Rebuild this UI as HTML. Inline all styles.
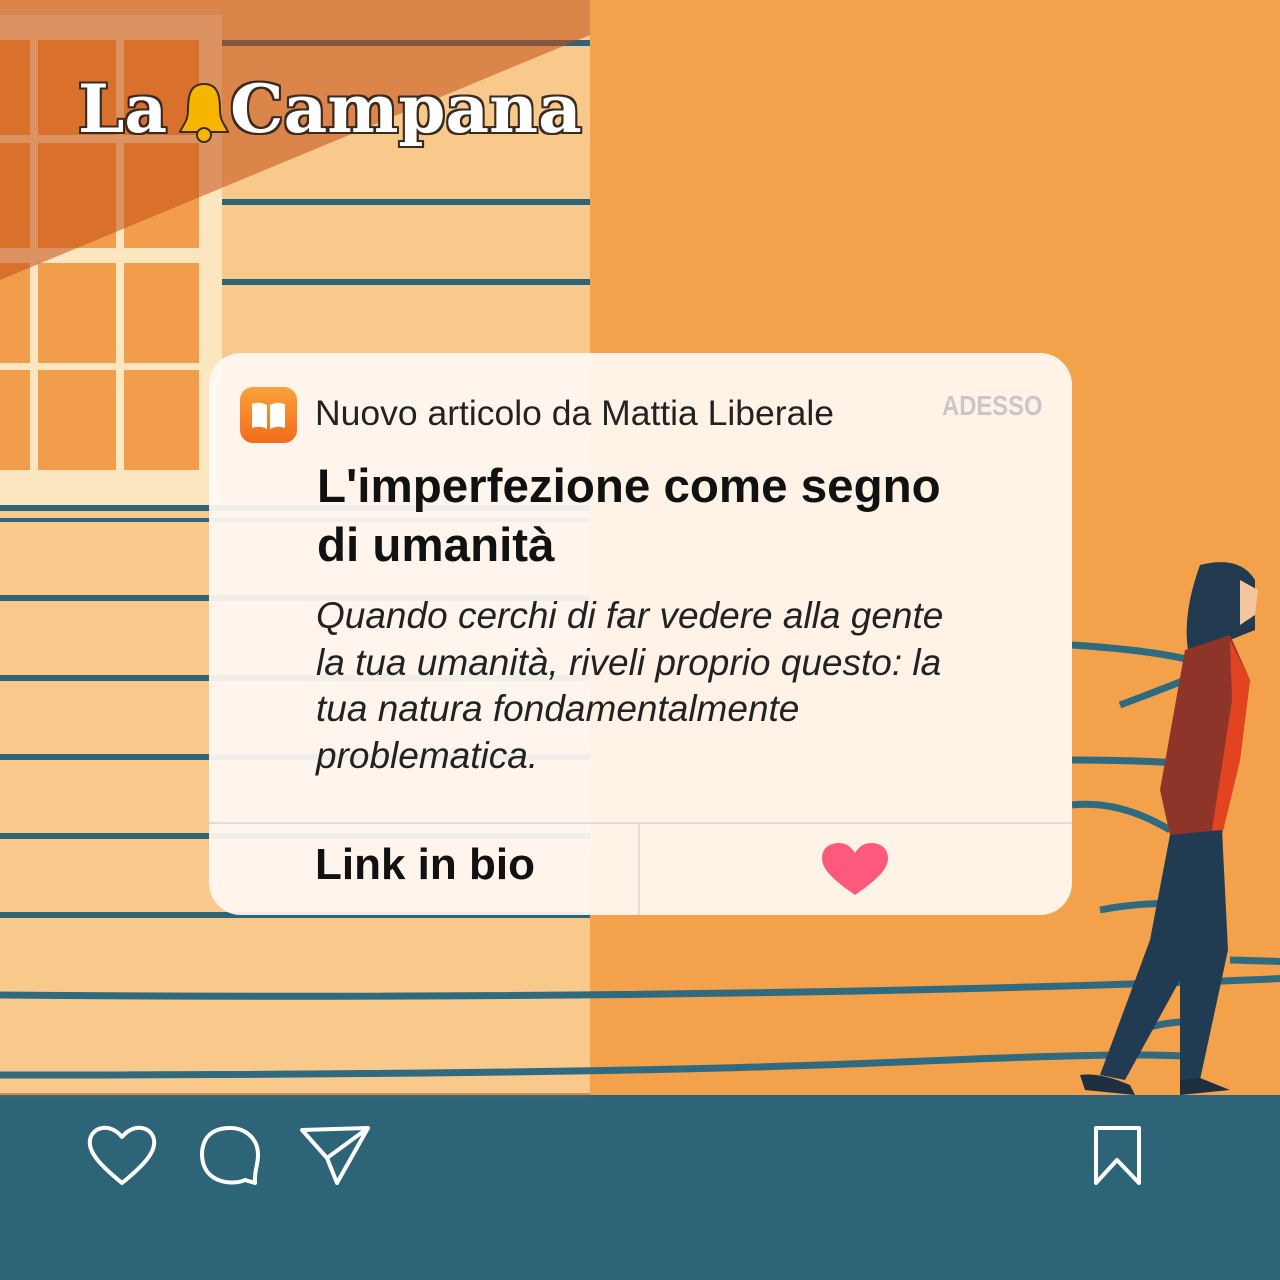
<!DOCTYPE html>
<html><head><meta charset="utf-8"><style>
body{margin:0;width:1280px;height:1280px;overflow:hidden;font-family:"Liberation Sans",sans-serif}
.card{position:absolute;left:209px;top:353px;width:863px;height:562px;border-radius:32px;background:rgba(255,249,243,0.93)}
.t{position:absolute;white-space:nowrap;color:#111}
.logo{position:absolute;top:70px;font-family:"DejaVu Serif","Liberation Serif",serif;font-weight:bold;font-size:66px;color:#fff;white-space:nowrap;
text-shadow:2px 0 #3a2a20,-2px 0 #3a2a20,0 2px #3a2a20,0 -2px #3a2a20,2px 2px #3a2a20,-2px -2px #3a2a20,2px -2px #3a2a20,-2px 2px #3a2a20;transform-origin:left}
</style></head><body>
<svg width="1280" height="1280" style="position:absolute;left:0;top:0">
<rect width="1280" height="1280" fill="#f4a14c"/>
<rect width="590" height="1100" fill="#f9c98c"/>
<rect x="0" y="15" width="222" height="490" fill="#fbe6c0"/>
<g fill="#f29d4c">
<rect x="0" y="40" width="30" height="95"/><rect x="38" y="40" width="78" height="95"/><rect x="124" y="40" width="75" height="95"/>
<rect x="0" y="143" width="30" height="105"/><rect x="38" y="143" width="78" height="105"/><rect x="124" y="143" width="75" height="105"/>
<rect x="0" y="263" width="30" height="100"/><rect x="38" y="263" width="78" height="100"/><rect x="124" y="263" width="75" height="100"/>
<rect x="0" y="370" width="30" height="100"/><rect x="38" y="370" width="78" height="100"/><rect x="124" y="370" width="75" height="100"/>
</g>
<g fill="#2f6478">
<rect x="222" y="40" width="368" height="6"/><rect x="222" y="199" width="368" height="6"/><rect x="222" y="279" width="368" height="6"/>
<rect x="0" y="505" width="590" height="6"/><rect x="0" y="518" width="590" height="4"/>
<rect x="0" y="595" width="590" height="6"/><rect x="0" y="675" width="590" height="6"/><rect x="0" y="754" width="590" height="6"/>
<rect x="0" y="833" width="590" height="6"/><rect x="0" y="912" width="590" height="6"/>
</g>
<polygon points="0,0 590,0 590,35 0,280" fill="#c44d14" opacity="0.55"/>
<g stroke="#2e6a80" stroke-width="7" fill="none">
<path d="M0 995 Q600 1000 1100 985 T1230 960"/>
<path d="M0 1075 Q600 1075 900 1062 T1200 1060"/>
<path d="M1072 645 Q1150 650 1190 660"/>
<path d="M1120 705 Q1160 690 1185 680"/>
<path d="M1072 760 Q1170 760 1230 768"/>
<path d="M1072 805 Q1120 800 1170 830"/>
<path d="M1100 910 Q1150 900 1210 905"/>
<path d="M1140 1030 Q1170 1020 1200 1022"/>
</g>
<path d="M1200 565 Q1240 555 1255 580 L1255 630 L1230 640 L1190 660 Q1180 620 1200 565Z" fill="#223a4f"/>
<path d="M1240 580 L1258 590 L1255 615 L1240 625Z" fill="#f3c6a0"/>
<path d="M1185 650 L1230 635 L1250 680 L1240 760 L1222 835 L1170 835 L1160 790Z" fill="#8e3428"/>
<path d="M1230 640 L1250 680 L1240 760 L1222 835 L1212 830 L1232 700Z" fill="#e24420"/>
<path d="M1170 835 L1222 830 L1228 950 L1200 1080 L1180 1080 L1180 980 L1125 1080 L1100 1075 L1150 940Z" fill="#203b52"/>
<path d="M1080 1075 Q1100 1072 1130 1085 L1135 1095 L1085 1090Z M1180 1080 L1200 1078 L1230 1090 L1180 1095Z" fill="#1e2f40"/>
<rect x="0" y="1095" width="1280" height="185" fill="#2e6478"/>
<rect x="0" y="1093" width="590" height="4" fill="#7d5a3a" opacity="0.5"/>
<g stroke="#fff" stroke-width="4" fill="none" stroke-linejoin="round">
<path d="M122 1183 C100 1165 88 1152 90 1140 C92 1127 110 1122 122 1137 C134 1122 152 1127 154 1140 C156 1152 144 1165 122 1183Z"/>
<path d="M245 1180 C235 1185 203 1185 202 1155 C202 1135 215 1128 230 1128 C245 1128 258 1138 258 1155 C258 1165 254 1172 255 1183 Z"/>
<path d="M302 1130 L368 1128 L337 1183 L327 1158 Z M327 1158 L368 1128"/>
<path d="M1096 1128 L1139 1128 L1139 1183 L1117 1160 L1096 1183 Z"/>
</g>
</svg>
<div class="logo" style="left:78px">La</div>
<div class="logo" style="left:230px;transform:scaleX(1.02)">Campana</div>
<svg style="position:absolute;left:176px;top:80px" width="56" height="64"><path d="M28 4 C14 4 12 16 12 30 C12 42 6 46 4 52 L52 52 C50 46 44 42 44 30 C44 16 42 4 28 4Z" fill="#f7b500" stroke="#3a2a20" stroke-width="2"/><circle cx="28" cy="55" r="7" fill="#f7b500" stroke="#3a2a20" stroke-width="2"/></svg>
<div class="card"></div>
<div style="position:absolute;left:209px;top:822px;width:863px;height:2px;background:#ddd"></div>
<div style="position:absolute;left:638px;top:823px;width:2px;height:92px;background:#ddd"></div>
<div style="position:absolute;left:240px;top:387px;width:57px;height:56px;border-radius:13px;background:linear-gradient(#f9a23a,#f26b1b)"></div>
<svg style="position:absolute;left:240px;top:387px" width="57" height="56"><path d="M12 17 Q20 14 27 18 L27 42 Q20 38 12 41Z M30 18 Q37 14 45 17 L45 41 Q37 38 30 42Z" fill="#fff"/></svg>
<div class="t" style="left:315px;top:393px;font-size:35.5px;color:#222">Nuovo articolo da Mattia Liberale</div>
<div class="t" style="left:942px;top:390px;font-size:28px;color:#c8c8c8;font-weight:bold;transform:scaleX(0.85);transform-origin:left">ADESSO</div>
<div class="t" style="left:317px;top:457px;font-size:47.5px;font-weight:bold;line-height:59px">L'imperfezione come segno<br>di umanità</div>
<div class="t" style="left:316px;top:593px;font-size:37px;font-style:italic;line-height:46.5px;color:#222">Quando cerchi di far vedere alla gente<br>la tua umanità, riveli proprio questo: la<br>tua natura fondamentalmente<br>problematica.</div>
<div class="t" style="left:315px;top:840px;font-size:44px;font-weight:bold">Link in bio</div>
<svg style="position:absolute;left:822px;top:843px" width="66" height="54"><path d="M33 52 C10 36 0 26 0 15 C0 5 8 0 17 0 C25 0 30 5 33 10 C36 5 41 0 49 0 C58 0 66 5 66 15 C66 26 56 36 33 52Z" fill="#fb5a7c"/></svg>
</body></html>
